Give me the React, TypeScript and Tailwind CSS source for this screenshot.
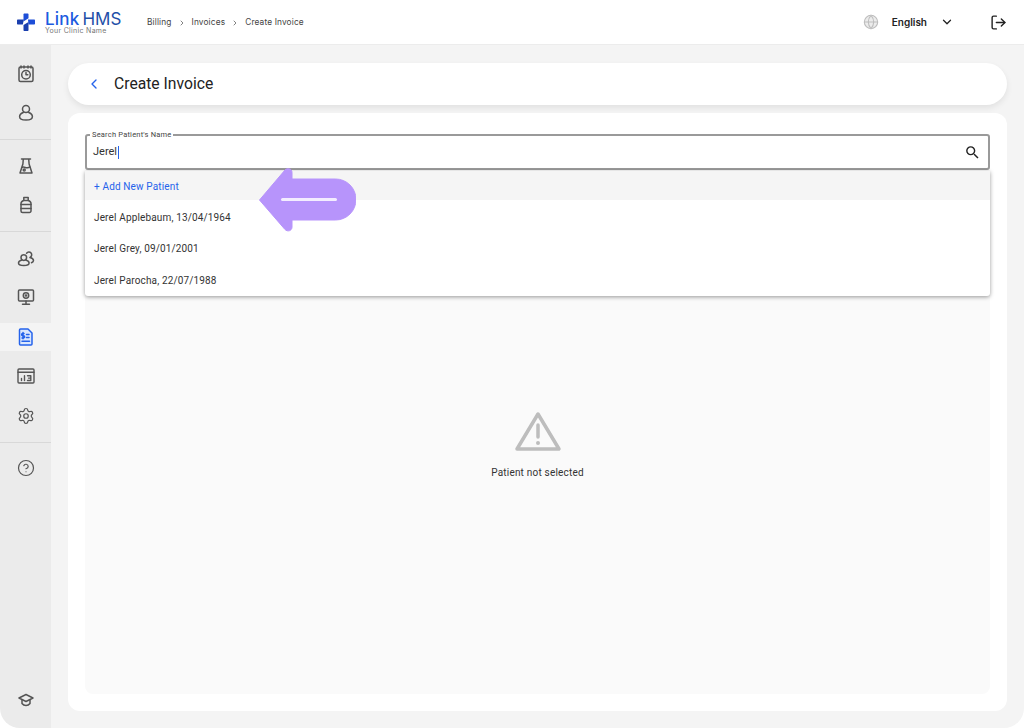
import { ChevronDown, ChevronLeft, ChevronRight, CircleHelp, Globe, LogOut, Settings } from 'lucide-react'
import type { ReactNode } from 'react'

function Ico({ children }: { children: ReactNode }) {
  return (
    <svg width="18" height="18" viewBox="0 0 18 18" fill="none" stroke="#555" strokeWidth="1.500" strokeLinecap="round" strokeLinejoin="round">
      {children}
    </svg>
  )
}

const CalendarIcon = () => (
  <Ico>
    <rect x="2" y="2" width="14" height="14.500" rx="1.500" />
    <path d="M4 1v2M7 1v2M11 1v2M14 1v2" />
    <circle cx="9" cy="9.700" r="4.300" />
    <path d="M9 7.600v2.200h1.800" />
  </Ico>
)

const PersonIcon = () => (
  <Ico>
    <circle cx="9" cy="5" r="3.500" />
    <path d="M6.300 8.500C4 9.300 2.600 10.800 2.600 12.700c0 2 2.800 3.300 6.400 3.300s6.400-1.300 6.400-3.300c0-1.900-1.400-3.400-3.700-4.200" />
  </Ico>
)

const FlaskIcon = () => (
  <Ico>
    <path d="M4.500 2h9M6.300 2l-.4 5L3 16h12L12.100 7l-.4-5" />
    <path d="M5 10.500c1.800-1.200 3.200.3 4.600.3 1.200 0 2.100-.5 3.300-.7" />
    <circle cx="7.200" cy="13" r="1" />
  </Ico>
)

const BottleIcon = () => (
  <Ico>
    <path d="M6.800 1.500h4.400v3H6.800zM6.800 4.500C5 5 4 6 4 7.500V15a1.500 1.500 0 0 0 1.500 1.500h7A1.500 1.500 0 0 0 14 15V7.500c0-1.500-1-2.500-2.800-3" />
    <path d="M4 8.500h10M4 12.500h10" />
  </Ico>
)

const UsersIcon = () => (
  <Ico>
    <circle cx="6.800" cy="8.600" r="2.800" />
    <path d="M4.800 11C2.800 11.600 1.500 12.600 1.500 14c0 1.500 2.300 2.500 5.300 2.500s5.300-1 5.300-2.500c0-1.400-1.300-2.400-3.300-3" />
    <path d="M9.600 4.200A2.800 2.800 0 1 1 13 8.400M13 8.600c2 .5 3.500 1.500 3.500 3 0 1-.8 1.700-2 2.200" />
  </Ico>
)

const MonitorIcon = () => (
  <Ico>
    <rect x="1.500" y="2" width="15" height="11" rx="1" />
    <path d="M9 13v3M5.500 16.200h7" />
    <circle cx="9" cy="7.500" r="2.700" />
    <circle cx="9" cy="7.500" r=".6" />
  </Ico>
)

const InvoiceIcon = () => (
  <svg width="18" height="18" viewBox="0 0 18 18" fill="none" stroke="#2563eb" strokeWidth="1.500" strokeLinecap="round" strokeLinejoin="round">
    <path d="M3.500 1h7.500l4 4v11a1 1 0 0 1-1 1H3.500a1 1 0 0 1-1-1V2a1 1 0 0 1 1-1z" fill="#dbe7fd" />
    <path d="M7 5.500H5.700a1 1 0 0 0 0 2.200h.8a1 1 0 0 1 0 2.200H5M6 4.500v6.200M9.500 6.500h2.500M9.500 9.500h2.500M5 13.300h7.500" />
  </svg>
)

const ReportIcon = () => (
  <svg width="18" height="16" viewBox="0 0 18 16" fill="none" stroke="#555" strokeWidth="1.400" strokeLinecap="round" strokeLinejoin="round">
    <rect x="1" y="1" width="16" height="14" rx="1" />
    <path d="M1 4.300h16M4.500 12.500v-2M7.500 12.500V7.800M10.500 7.800h3.300v4.700h-3.300M11.500 10.100h2.300" />
  </svg>
)

const CapIcon = () => (
  <svg width="16" height="14" viewBox="0 0 16 14" fill="none" stroke="#555" strokeWidth="1.500" strokeLinecap="round" strokeLinejoin="round">
    <path d="M8 1.500 1 5l7 3.500L15 5z" />
    <path d="M4 7v3.500c1 1.300 2.400 2 4 2s3-.7 4-2V7" />
  </svg>
)

function NavItem({ children, active, className }: { children: ReactNode; active?: boolean; className?: string }) {
  return <div className={`flex h-[28px] items-center justify-center ${active ? 'bg-[#f4f4f4]' : ''} ${className ?? ''}`}>{children}</div>
}

function Sidebar() {
  return (
    <aside className="flex w-[51px] shrink-0 flex-col bg-[#ebebeb] pt-[15px] pb-[14px]">
      <div className="flex flex-col gap-[11px] pb-3">
        <NavItem><CalendarIcon /></NavItem>
        <NavItem><PersonIcon /></NavItem>
      </div>
      <div className="border-t border-[#d8d8d8] pt-3 pb-3">
        <div className="flex flex-col gap-[11px]">
          <NavItem><FlaskIcon /></NavItem>
          <NavItem><BottleIcon /></NavItem>
        </div>
      </div>
      <div className="border-t border-[#d8d8d8] pt-3 pb-3">
        <div className="flex flex-col gap-[11px]">
          <NavItem><UsersIcon /></NavItem>
          <NavItem><MonitorIcon /></NavItem>
          <NavItem active className="mt-px"><InvoiceIcon /></NavItem>
          <NavItem><ReportIcon /></NavItem>
          <NavItem className="mt-px"><Settings size={18} strokeWidth={1.600} color="#555" /></NavItem>
        </div>
      </div>
      <div className="border-t border-[#d8d8d8] pt-[11px]">
        <NavItem><CircleHelp size={18} strokeWidth={1.600} color="#555" /></NavItem>
      </div>
      <div className="mt-auto">
        <NavItem><CapIcon /></NavItem>
      </div>
    </aside>
  )
}

function Header() {
  return (
    <header className="relative z-10 flex h-[45px] shrink-0 items-center border-b border-[#ececec] bg-white px-[17px] font-['Inter',sans-serif]">
      <svg width="18" height="18" viewBox="0 0 18 18" className="shrink-0">
        <path d="M6.500 1.500c0-.6.500-1 1-1h3c.6 0 1 .4 1 1v3.800l-5 3.200z" fill="#1d4ed8" />
        <path d="M0 7.500c0-.6.400-1 1-1h5.800l-1 5H1c-.6 0-1-.4-1-1z" fill="#1a3fae" />
        <path d="M11 6.500h6c.6 0 1 .4 1 1v3c0 .6-.4 1-1 1h-5.500z" fill="#1d4ed8" />
        <path d="M6.500 12l5-3v8c0 .6-.4 1-1 1h-3c-.6 0-1-.4-1-1z" fill="#1a3fae" />
      </svg>
      <div className="ml-[10px] flex w-[76px] shrink-0 flex-col gap-px pt-[2px]">
        <div className="flex h-[14px] items-center gap-[3px] text-[17px] leading-[14px] whitespace-nowrap">
          <span className="font-medium tracking-[0.2px] text-[#1d5be0]">Link</span>
          <span className="text-[#1f4fa8]">HMS</span>
        </div>
        <span className="text-[7px] leading-[7px] tracking-[0.3px] whitespace-nowrap text-[#777]">Your Clinic Name</span>
      </div>
      <nav className="ml-[26px] flex items-center pt-px text-[8.300px] tracking-[0.15px] text-[#444]">
        <span>Billing</span>
        <ChevronRight size={8} className="mx-[6px]" strokeWidth={2} />
        <span>Invoices</span>
        <ChevronRight size={8} className="mx-[6px]" strokeWidth={2} />
        <span>Create Invoice</span>
      </nav>
      <div className="ml-auto flex items-center">
        <Globe size={16} strokeWidth={1.600} color="#bdbdbd" fill="#ececec" />
        <span className="ml-[13px] text-[10px] font-semibold text-[#222]">English</span>
        <ChevronDown size={14} strokeWidth={2.200} color="#222" className="ml-[13px]" />
        <LogOut size={17} strokeWidth={2} color="#222" className="ml-[36px] -scale-x-100 rotate-180" />
      </div>
    </header>
  )
}

function PatientDropdown() {
  const patients = ['Jerel Applebaum, 13/04/1964', 'Jerel Grey, 09/01/2001', 'Jerel Parocha, 22/07/1988']
  return (
    <div className="absolute top-[37px] right-0 left-0 z-20 rounded-b-[3px] bg-white shadow-[0_1px_4px_rgba(0,0,0,0.4)]">
      <div className="flex h-[29px] items-center bg-[#f5f5f5] pt-[2px] pl-[9px] text-[10px] tracking-[0.15px] text-[#2563eb]">+ Add New Patient</div>
      {patients.map((p, i) => (
        <div key={p} className={`flex h-[32px] items-center pl-[9px] text-[10px] tracking-[0.15px] text-[#333] ${i === 0 ? 'pt-[2px]' : ''}`}>
          {p}
        </div>
      ))}
      <svg width="98" height="66" viewBox="0 0 98 66" className="absolute top-[-4px] left-[173px]">
        <path d="M1.500 33 27 3c2.500-2.500 7-1.500 7 2.500V12h43.500a20.500 20.500 0 0 1 0 41H34v7c0 4-4.500 5-7 2.500z" fill="#b794fb" stroke="#b794fb" strokeLinejoin="round" />
        <rect x="23" y="31" width="56" height="3" rx="1.500" fill="#f3edff" />
      </svg>
    </div>
  )
}

export default function App() {
  return (
    <div className="h-[728px] w-[1024px] overflow-hidden bg-white font-['Roboto',sans-serif]">
      <div className="flex h-full flex-col overflow-hidden rounded-[20px]">
        <Header />
        <div className="flex min-h-0 flex-1">
          <Sidebar />
          <main className="flex flex-1 flex-col gap-2 bg-[#f4f4f4] pt-[18px] pr-[17px] pb-[17px] pl-[17px]">
            <div className="flex h-[42px] shrink-0 items-center rounded-full bg-white pl-[18px] shadow-[0_3px_6px_rgba(0,0,0,0.08)]">
              <ChevronLeft size={16} strokeWidth={2} color="#2563eb" />
              <h1 className="ml-[12px] text-[15.700px] leading-none font-normal text-[#222]">Create Invoice</h1>
            </div>
            <section className="flex min-h-0 flex-1 flex-col gap-[16px] rounded-xl bg-white px-[17px] pt-[21px] pb-[17px]">
              <div className="relative h-[36px] shrink-0">
                <div className="flex h-full items-center justify-between rounded-[3px] border-2 border-[#9a9a9a] pr-[7px] pl-[6px]">
                  <div className="flex items-center text-[11px] text-[#333]">
                    Jerel
                    <span className="ml-[1px] h-[13px] w-px bg-[#2563eb]" />
                  </div>
                  <svg width="17" height="17" viewBox="0 0 24 24" fill="#222">
                    <path d="M15.500 14h-.79l-.28-.27A6.471 6.471 0 0 0 16 9.500 6.500 6.500 0 1 0 9.500 16c1.610 0 3.090-.59 4.230-1.570l.27.28v.79l5 4.990L20.490 19l-4.990-5zm-6 0C7.010 14 5 11.990 5 9.500S7.010 5 9.500 5 14 7.010 14 9.500 11.990 14 9.500 14z" />
                  </svg>
                </div>
                <span className="absolute top-[-4px] left-[5px] bg-white px-[2px] text-[7.500px] leading-[10px] tracking-[0.2px] text-[#444]">Search Patient's Name</span>
                <PatientDropdown />
              </div>
              <div className="flex flex-1 flex-col items-center justify-center rounded-lg bg-[#fafafa] pt-[10px]">
                <svg width="48" height="42" viewBox="0 0 48 42" fill="none">
                  <path d="M24 3 45 38H3z" stroke="#bdbdbd" strokeWidth="3.500" strokeLinejoin="round" />
                  <path d="M24 14v12" stroke="#bdbdbd" strokeWidth="3.500" strokeLinecap="round" />
                  <circle cx="24" cy="32" r="2" fill="#bdbdbd" />
                </svg>
                <p className="mt-[13px] text-[10px] leading-[14px] tracking-[0.2px] text-[#333]">Patient not selected</p>
              </div>
            </section>
          </main>
        </div>
      </div>
    </div>
  )
}
